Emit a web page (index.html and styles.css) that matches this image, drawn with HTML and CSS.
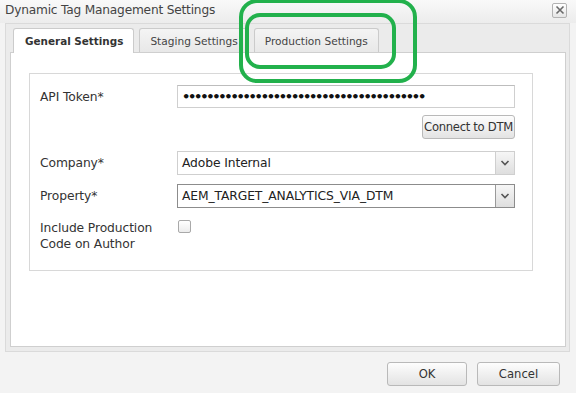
FILE: index.html
```html
<!DOCTYPE html>
<html>
<head>
<meta charset="utf-8">
<link rel="stylesheet" href="styles.css">
</head>
<body>
<div class="dialog">
  <div class="titlebar">
    <span class="title">Dynamic Tag Management Settings</span>
    <span class="close"><svg width="10" height="10" viewBox="0 0 10 10"><path d="M1.5 1.5 L8.5 8.5 M8.5 1.5 L1.5 8.5" stroke="#6a6a6a" stroke-width="1.6" fill="none"/></svg></span>
  </div>
  <div class="body">
    <div class="tabs">
      <div class="tab active">General Settings</div>
      <div class="tab">Staging Settings</div>
      <div class="tab">Production Settings</div>
    </div>
    <div class="panel">
      <div class="fieldset">
        <div class="row row-token">
          <div class="label">API Token*</div>
          <div class="field input password">••••••••••••••••••••••••••••••••••••••••</div>
        </div>
        <div class="row row-connect">
          <div class="label"></div>
          <div class="field right"><button class="btn connect">Connect to DTM</button></div>
        </div>
        <div class="row row-company">
          <div class="label">Company*</div>
          <div class="field select"><span class="value">Adobe Internal</span><span class="arrow"><svg width="10" height="6" viewBox="0 0 10 6"><path d="M1.5 1 L5 4.5 L8.5 1" stroke="#555" stroke-width="1.6" fill="none"/></svg></span></div>
        </div>
        <div class="row row-property">
          <div class="label">Property*</div>
          <div class="field select focus"><span class="value">AEM_TARGET_ANALYTICS_VIA_DTM</span><span class="arrow"><svg width="10" height="6" viewBox="0 0 10 6"><path d="M1.5 1 L5 4.5 L8.5 1" stroke="#555" stroke-width="1.6" fill="none"/></svg></span></div>
        </div>
        <div class="row row-check">
          <div class="label multi">Include Production<br>Code on Author</div>
          <div class="field"><span class="checkbox"></span></div>
        </div>
      </div>
    </div>
  </div>
  <div class="footer">
    <button class="btn ok">OK</button>
    <button class="btn cancel">Cancel</button>
  </div>
  <div class="annot outer"></div>
  <div class="annot inner"></div>
</div>
</body>
</html>
```

FILE: styles.css
```css
html, body {
  margin: 0;
  padding: 0;
}
body {
  width: 576px;
  height: 393px;
  overflow: hidden;
  background: #f3f3f3;
  font-family: "DejaVu Sans", "Noto Sans", sans-serif;
  color: #333;
}
.dialog {
  position: relative;
  width: 576px;
  height: 393px;
  background: #f3f3f3;
}
.titlebar {
  height: 23px;
  display: flex;
  align-items: center;
  justify-content: space-between;
  padding: 0 9px 0 5px;
  box-sizing: border-box;
  background: linear-gradient(#f9f9f9, #ececec);
}
.title {
  font-size: 12.2px;
  color: #444;
  letter-spacing: -0.2px;
  margin-top: -3px;
}
.close {
  width: 13px;
  height: 13px;
  border: 1px solid #b3b3b3;
  border-radius: 2px;
  background: linear-gradient(#ffffff, #e6e6e6);
  display: flex;
  align-items: center;
  justify-content: center;
  margin-top: -3px;
}
.body {
  margin: 0 6px 0 5px;
  border: 1px solid #dadada;
  background: #ebebeb;
  padding: 3px 3px 4px 4px;
}
.tabs {
  display: flex;
  padding-left: 3px;
  gap: 5px;
  height: 25px;
  align-items: flex-end;
}
.tab {
  height: 24px;
  box-sizing: border-box;
  border: 1px solid #cbcbcb;
  border-bottom: none;
  border-radius: 3px 3px 0 0;
  background: linear-gradient(#f4f4f4, #e8e8e8);
  font-size: 10.6px;
  color: #444;
  display: flex;
  align-items: center;
  justify-content: center;
  padding: 0 10px;
}
.tab.active {
  height: 25px;
  background: #fff;
  font-weight: bold;
  color: #333;
  padding: 0 10px 0 11px;
  margin-bottom: -1px;
  position: relative;
  z-index: 1;
  font-size: 10.4px;
}
.panel {
  background: #fff;
  border: 1px solid #cfcfcf;
  height: 295px;
  box-sizing: border-box;
  padding: 20px 0 0 18px;
}
.fieldset {
  width: 504px;
  height: 198px;
  box-sizing: border-box;
  border: 1px solid #d8d8d8;
  padding: 11px 17px 0 10px;
}
.row {
  display: flex;
  align-items: center;
}
.label {
  width: 137px;
  flex: none;
  font-size: 12.3px;
  color: #333;
  letter-spacing: -0.1px;
}
.label.multi {
  line-height: 16px;
  align-self: flex-start;
}
.field {
  width: 338px;
  box-sizing: border-box;
}
.input {
  height: 23px;
  border: 1px solid #cfcfcf;
  border-top-color: #bdbdbd;
  background: #fff;
  display: flex;
  align-items: center;
  padding-left: 4px;
}
.password {
  font-size: 13px;
  font-weight: bold;
  letter-spacing: -2.26px;
  color: #111;
  font-family: "DejaVu Sans", sans-serif;
  overflow: hidden;
  white-space: nowrap;
}
.row-connect {
  margin-top: 7px;
}
.right {
  display: flex;
  justify-content: flex-end;
}
.btn {
  font-family: "DejaVu Sans", sans-serif;
  font-size: 11.6px;
  color: #333;
  border: 1px solid #b9b9b9;
  border-radius: 3px;
  background: linear-gradient(#fdfdfd, #e3e3e3);
  padding: 0;
  height: 24px;
  box-sizing: border-box;
}
.connect {
  width: 93px;
  letter-spacing: -0.3px;
}
.row-company {
  margin-top: 12px;
}
.row-property {
  margin-top: 9px;
}
.select {
  height: 24px;
  border: 1px solid #cfcfcf;
  background: #fff;
  display: flex;
  align-items: stretch;
}
.select.focus {
  border-color: #8c8c8c;
}
.select .value {
  flex: 1;
  display: flex;
  align-items: center;
  padding-left: 4px;
  font-size: 12.3px;
  color: #222;
  letter-spacing: -0.1px;
}
.select .arrow {
  width: 18px;
  border-left: 1px solid #cfcfcf;
  background: linear-gradient(#f6f6f6, #dedede);
  display: flex;
  align-items: center;
  justify-content: center;
}
.select.focus .arrow {
  border-left-color: #9a9a9a;
}
.row-check {
  margin-top: 12px;
  align-items: flex-start;
}
.checkbox {
  display: block;
  width: 11px;
  height: 11px;
  border: 1px solid #a9a9a9;
  border-radius: 2px;
  background: linear-gradient(#ffffff, #ececec);
  margin-left: 1px;
}
.footer {
  display: flex;
  justify-content: flex-end;
  gap: 10px;
  padding: 10px 16px 0 0;
}
.ok {
  width: 80px;
}
.cancel {
  width: 83px;
}
.annot {
  position: absolute;
  border: 4px solid #22b14c;
  box-sizing: border-box;
  pointer-events: none;
}
.annot.outer {
  left: 239px;
  top: -1px;
  width: 178px;
  height: 84px;
  border-radius: 18px;
}
.annot.inner {
  left: 245px;
  top: 13px;
  width: 151px;
  height: 56px;
  border-radius: 15px;
}
```
